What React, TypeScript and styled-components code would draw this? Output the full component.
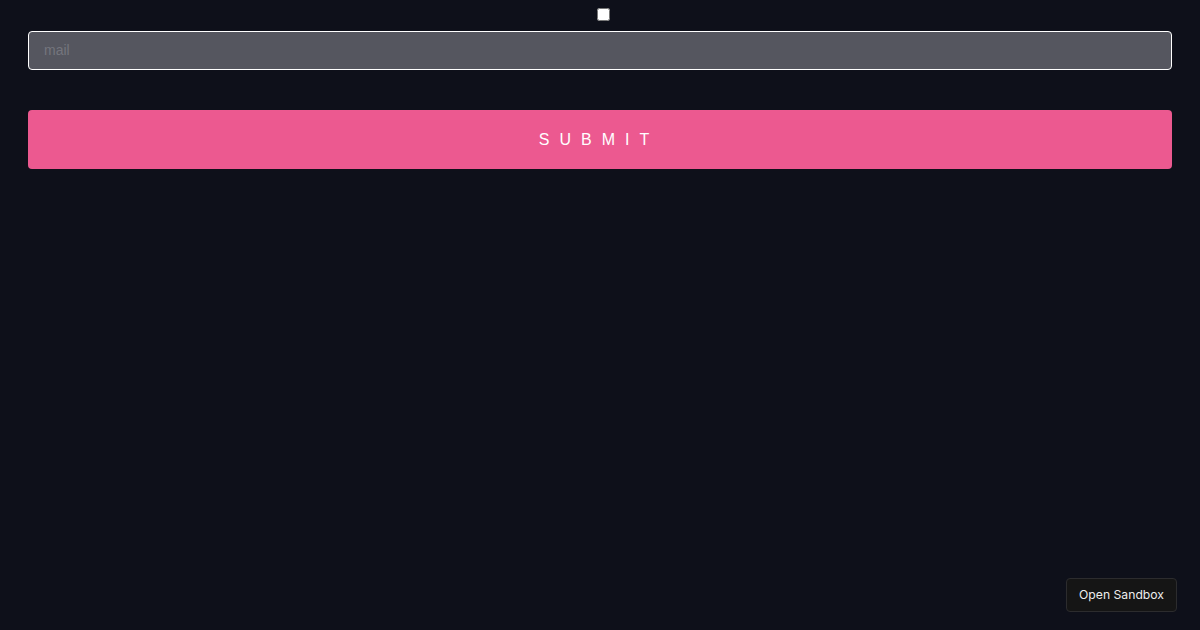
import React from "react";
import styled, { createGlobalStyle } from "styled-components";

const GlobalStyle = createGlobalStyle`
  html, body {
    margin: 0;
    padding: 0;
    background: #0e101a;
    font-family: "Liberation Sans", Arial, sans-serif;
  }
`;

const Page = styled.div`
  min-height: 630px;
  box-sizing: border-box;
  padding: 8px 28px 0;
`;

const Form = styled.form`
  display: flex;
  flex-direction: column;
`;

const CheckRow = styled.div`
  display: flex;
  justify-content: center;
  padding-left: 6px;
  height: 13px;
  margin-bottom: 10px;
`;

const Check = styled.input`
  width: 13px;
  height: 13px;
  margin: 0;
`;

const Input = styled.input`
  box-sizing: border-box;
  width: 100%;
  height: 39px;
  border: 1px solid #ffffff;
  border-radius: 4px;
  background: #55565f;
  padding: 9px 15px 11px;
  font-family: "Liberation Sans", Arial, sans-serif;
  font-size: 14px;
  color: #ffffff;
  outline: none;

  &::placeholder {
    color: #74757d;
  }
`;

const Submit = styled.button`
  margin-top: 40px;
  height: 59px;
  width: 100%;
  border: none;
  border-radius: 4px;
  background: #ec5990;
  color: #ffffff;
  font-family: "Liberation Sans", Arial, sans-serif;
  font-size: 16px;
  font-weight: 100;
  letter-spacing: 10px;
  text-transform: uppercase;
  padding: 0 2px 0 0;
  cursor: pointer;
`;

const SandboxButton = styled.button`
  position: fixed;
  right: 23px;
  bottom: 18px;
  height: 34px;
  padding: 0 12px 2px;
  background: #151515;
  border: 1px solid #2c2c2e;
  border-radius: 4px;
  color: #ededed;
  font-family: Inter, "Liberation Sans", sans-serif;
  font-size: 12.2px;
  cursor: pointer;
`;

export default function App() {
  return (
    <>
      <GlobalStyle />
      <Page>
        <Form onSubmit={(e) => e.preventDefault()}>
          <CheckRow>
            <Check type="checkbox" />
          </CheckRow>
          <Input type="text" placeholder="mail" />
          <Submit type="submit">submit</Submit>
        </Form>
      </Page>
      <SandboxButton type="button">Open Sandbox</SandboxButton>
    </>
  );
}
